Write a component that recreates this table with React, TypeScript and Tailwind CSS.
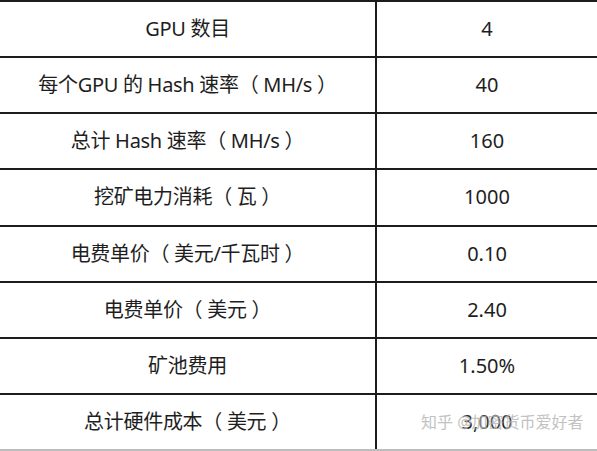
import React from 'react';

const ROWS = [
  ['GPU 数目', '4'],
  ['每个GPU 的 Hash 速率（ MH/s ）', '40'],
  ['总计 Hash 速率（ MH/s ）', '160'],
  ['挖矿电力消耗（ 瓦 ）', '1000'],
  ['电费单价（ 美元/千瓦时 ）', '0.10'],
  ['电费单价（ 美元 ）', '2.40'],
  ['矿池费用', '1.50%'],
  ['总计硬件成本（ 美元 ）', '3,000'],
];

export default function App() {
  return (
    <div
      className="relative w-[597px] h-[451px] bg-white text-[#1e1e1e] overflow-hidden"
      style={{ fontFamily: '"Noto Sans", "Noto Sans CJK SC", sans-serif' }}
    >
      <div className="grid grid-rows-8 h-full border-b-2 border-[#bdbdbd]">
        {ROWS.map(([label, value]) => (
          <div key={label} className="grid grid-cols-[377px_1fr] border-t-2 border-[#1c1c1c]">
            <div className="flex items-center justify-center border-r-2 border-[#1c1c1c] text-[20px] tracking-[-0.3px]">
              {label}
            </div>
            <div className="flex items-center justify-center text-[20px]">{value}</div>
          </div>
        ))}
      </div>

      {/* watermark */}
      <div
        className="absolute left-[421px] top-[414px] text-[16px] leading-none text-[#b4b4b4] opacity-80 whitespace-nowrap"
        style={{ textShadow: '0 0 2px #fff' }}
      >
        知乎 @加密货币爱好者
      </div>
    </div>
  );
}
